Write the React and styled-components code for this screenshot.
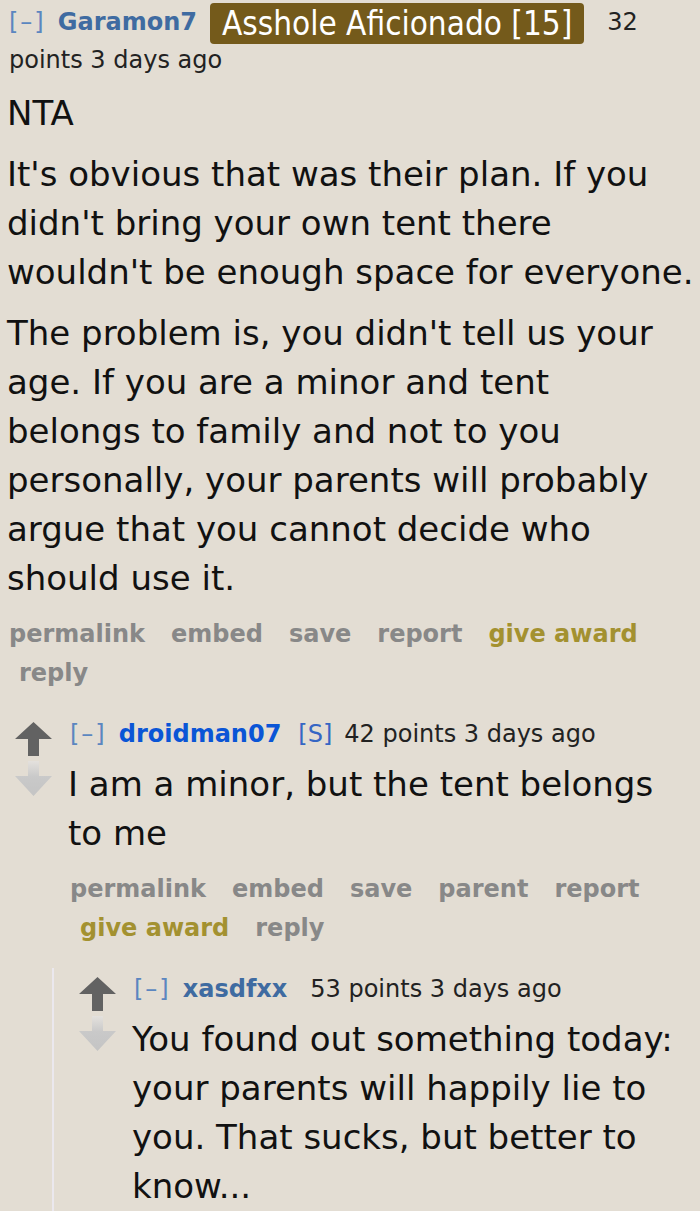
import React from 'react'
import styled, { createGlobalStyle } from 'styled-components'

const GlobalStyle = createGlobalStyle`
  html, body {
    margin: 0;
    padding: 0;
    background: #e3ddd3;
  }
  body {
    font-family: "DejaVu Sans", Verdana, sans-serif;
    color: #222;
  }
`

const Page = styled.div`
  width: 700px;
  height: 1211px;
  box-sizing: border-box;
  padding: 4px 2px 0 7px;
  overflow: hidden;
`

const Entry = styled.div`
  display: flex;
  margin-top: ${p => p.$first ? 0 : 23}px;
`

const MidCol = styled.div`
  flex: 0 0 61px;
  box-sizing: border-box;
  padding: 6px 0 0 8px;
  display: flex;
  flex-direction: column;
  gap: 5px;
`

const Content = styled.div`
  flex: 1;
  min-width: 0;
`

const Tagline = styled.div`
  font-size: 24px;
  line-height: 37px;
  padding-left: 2px;
`

const Expand = styled.span`
  color: #5b86c0;
  letter-spacing: 2px;
  margin-right: 12px;
`

const Author = styled.span`
  font-weight: bold;
  color: ${p => p.$op ? '#0a55d6' : '#3f6ba1'};
  margin-right: ${p => p.$gap}px;
`

const Submitter = styled.span`
  color: #3566c4;
  margin-right: 12px;
`

const Flair = styled.span`
  display: inline-block;
  vertical-align: middle;
  height: 41px;
  line-height: 41px;
  margin: -2px 23px -2px 0;
  padding: 0 12px;
  border-radius: 4px;
  background: #745a1b;
  color: #fff;
  font-family: "DejaVu Sans Condensed", "Liberation Sans", sans-serif;
  font-size: 33px;
`

const Score = styled.span`
  color: #222;
`

const Body = styled.div`
  margin-top: ${p => p.$mt}px;
  font-size: 34px;
  line-height: 49px;
  color: #111;
`

const Para = styled.p`
  margin: 0 0 12px;
  white-space: nowrap;
`

const Buttons = styled.ul`
  list-style: none;
  margin: 0;
  padding: 0 0 0 2px;
  display: flex;
  flex-wrap: wrap;
  column-gap: 6px;
  font-size: 24px;
  font-weight: bold;
  line-height: 39px;
`

const Button = styled.li`
  padding: 0 10px;
  color: ${p => p.$gold ? '#a39130' : '#888'};
  &:first-child {
    padding-left: 0;
  }
`

const Children = styled.div`
  margin: 20px 0 0 45px;
  padding: 3px 0 0 17px;
  border-left: 2px solid #ebe8ee;
`

function UpArrow() {
  return (
    <svg width='37' height='34' viewBox='0 0 37 34'>
      <path d='M18.5 0 L37 17 L24 17 L24 34 L13 34 L13 17 L0 17 Z' fill='#626262' />
    </svg>
  )
}

function DownArrow() {
  return (
    <svg width='37' height='35' viewBox='0 0 37 35'>
      <defs>
        <linearGradient id='downFade' x1='0' y1='0' x2='0' y2='1'>
          <stop offset='0' stopColor='#e4e1dd' />
          <stop offset='0.45' stopColor='#c9c9c9' />
          <stop offset='1' stopColor='#c4c4c4' />
        </linearGradient>
      </defs>
      <path d='M13 0 H24 V15 H37 L18.5 35 L0 15 H13 Z' fill='url(#downFade)' />
    </svg>
  )
}

function Arrows() {
  return (
    <MidCol>
      <UpArrow />
      <DownArrow />
    </MidCol>
  )
}

// lines are kept as they wrap in the original thread
function Paragraph({ lines }) {
  return (
    <Para>
      {lines.map((line, i) =>
        <React.Fragment key={i}>
          {i > 0 && <br />}
          {line}
        </React.Fragment>
      )}
    </Para>
  )
}

function ButtonRow({ parent }) {
  const items = parent
    ? ['permalink', 'embed', 'save', 'parent', 'report', 'give award', 'reply']
    : ['permalink', 'embed', 'save', 'report', 'give award', 'reply']
  return (
    <Buttons>
      {items.map(item => <Button key={item} $gold={item === 'give award'}>{item}</Button>)}
    </Buttons>
  )
}

export default function App() {
  return (
    <>
      <GlobalStyle />
      <Page>
        <Entry $first>
          <Content>
            <Tagline>
              <Expand>[–]</Expand>
              <Author $gap={13}>Garamon7</Author>
              <Flair>Asshole Aficionado [15]</Flair>
              <Score>32 points 3 days ago</Score>
            </Tagline>
            <Body $mt={10}>
              <Paragraph lines={['NTA']} />
              <Paragraph lines={[
                'It\'s obvious that was their plan. If you',
                'didn\'t bring your own tent there',
                'wouldn\'t be enough space for everyone.'
              ]} />
              <Paragraph lines={[
                'The problem is, you didn\'t tell us your',
                'age. If you are a minor and tent',
                'belongs to family and not to you',
                'personally, your parents will probably',
                'argue that you cannot decide who',
                'should use it.'
              ]} />
            </Body>
            <ButtonRow />
          </Content>
        </Entry>

        <Entry>
          <Arrows />
          <Content>
            <Tagline>
              <Expand>[–]</Expand>
              <Author $op $gap={17}>droidman07</Author>
              <Submitter>[S]</Submitter>
              <Score>42 points 3 days ago</Score>
            </Tagline>
            <Body $mt={7}>
              <Paragraph lines={['I am a minor, but the tent belongs', 'to me']} />
            </Body>
            <ButtonRow parent />
          </Content>
        </Entry>

        <Children>
          <Entry $first>
            <Arrows />
            <Content>
              <Tagline>
                <Expand>[–]</Expand>
                <Author $gap={23}>xasdfxx</Author>
                <Score>53 points 3 days ago</Score>
              </Tagline>
              <Body $mt={7}>
                <Paragraph lines={[
                  'You found out something today:',
                  'your parents will happily lie to',
                  'you. That sucks, but better to',
                  'know...'
                ]} />
              </Body>
            </Content>
          </Entry>
        </Children>
      </Page>
    </>
  )
}
